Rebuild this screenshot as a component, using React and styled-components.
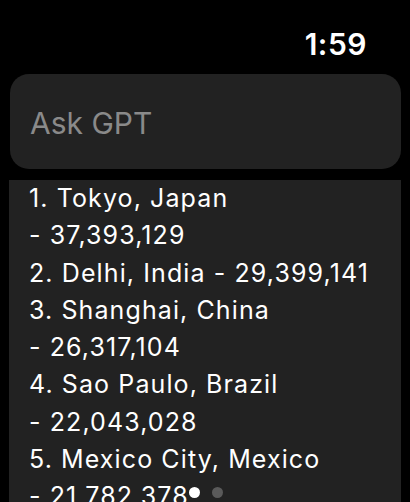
import React from "react";
import styled, { createGlobalStyle } from "styled-components";

const Global = createGlobalStyle`
  html, body { margin: 0; padding: 0; background: #000; }
  body { width: 410px; height: 502px; overflow: hidden; font-family: Inter, "Noto Sans", sans-serif; }
`;

const Screen = styled.div`
  width: 410px;
  height: 502px;
  background: #000;
  display: flex;
  flex-direction: column;
  overflow: hidden;
`;

const StatusBar = styled.div`
  flex-shrink: 0;
  height: 74px;
  display: flex;
  justify-content: flex-end;
  padding: 24px 43px 0 0;
  box-sizing: border-box;
`;

const Time = styled.div`
  color: #fff;
  font-size: 30px;
  font-weight: 600;
  line-height: 40px;
  letter-spacing: 0.5px;
`;

const AskBox = styled.div`
  flex-shrink: 0;
  margin: 0 9px 0 10px;
  height: 95px;
  border-radius: 19px;
  background: #222222;
  display: flex;
  align-items: center;
  padding-left: 20px;
  padding-top: 2px;
  box-sizing: border-box;
  color: #8a8a8a;
  font-size: 30px;
`;

const Answer = styled.div`
  margin: 11px 9px 0 9px;
  flex: 1 1 auto;
  min-height: 0;
  overflow: hidden;
  background: #222222;
  padding: 0 0 0 20px;
  color: #fff;
  font-size: 25px;
  letter-spacing: 1.1px;
  line-height: 37.3px;
`;

const Line = styled.div`
  white-space: nowrap;
  display: flex;
  align-items: center;
`;

const Dot = styled.span`
  flex-shrink: 0;
  width: 11px;
  height: 11px;
  border-radius: 50%;
  background: ${p => (p.$active ? "#fff" : "#5a5a5a")};
  margin-left: ${p => (p.$active ? "0px" : "12px")};
  display: inline-block;
  transform: translateY(-5px);
`;

const lines = [
  "1. Tokyo, Japan",
  "- 37,393,129",
  "2. Delhi, India - 29,399,141",
  "3. Shanghai, China",
  "- 26,317,104",
  "4. Sao Paulo, Brazil",
  "- 22,043,028",
  "5. Mexico City, Mexico",
];

export default function App() {
  return (
    <Screen>
      <Global />
      <StatusBar>
        <Time>1:59</Time>
      </StatusBar>
      <AskBox>Ask GPT</AskBox>
      <Answer>
        {lines.map(l => (
          <Line key={l}>{l}</Line>
        ))}
        <Line>
          - 21,782,378
          <Dot $active />
          <Dot />
        </Line>
      </Answer>
    </Screen>
  );
}
